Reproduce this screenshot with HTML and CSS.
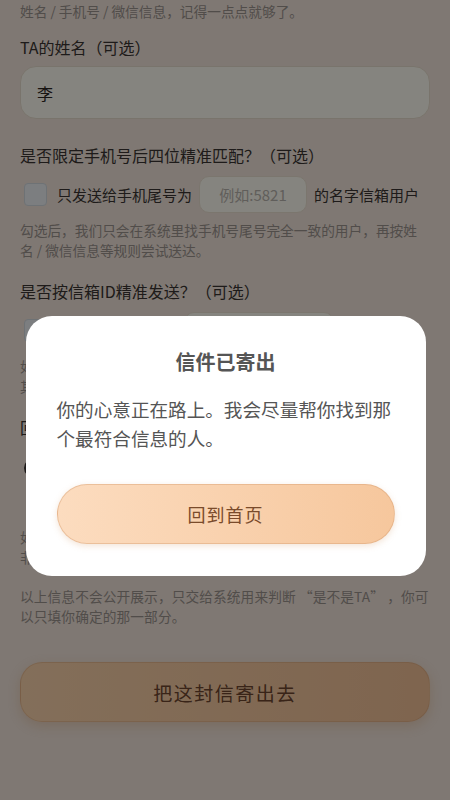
FILE: index.html
```html
<!DOCTYPE html>
<html lang="zh-CN">
<head>
    <meta charset="UTF-8">
    <meta name="viewport" content="width=device-width, initial-scale=1.0">
    <title>寄一封信</title>
    <link rel="stylesheet" href="styles.css">
</head>
<body>
    <div class="page">
        <p class="hint hint-top">姓名 / 手机号 / 微信信息，记得一点点就够了。</p>

        <div class="field">
            <div class="label">TA的姓名（可选）</div>
            <input class="text-input" type="text" value="李">
        </div>

        <div class="field after-input">
            <div class="label">是否限定手机号后四位精准匹配？（可选）</div>
            <div class="check-row">
                <span class="checkbox"></span>
                <span>只发送给手机尾号为</span>
                <input class="mini-input" type="text" placeholder="例如:5821">
                <span>的名字信箱用户</span>
            </div>
            <p class="hint">勾选后，我们只会在系统里找手机号尾号完全一致的用户，再按姓名 / 微信信息等规则尝试送达。</p>
        </div>

        <div class="field">
            <div class="label">是否按信箱ID精准发送？（可选）</div>
            <div class="check-row">
                <span class="checkbox"></span>
                <span>只发送给信箱ID为</span>
                <input class="mini-input wide" type="text" placeholder="例如:A1024">
                <span>的用户</span>
            </div>
            <p class="hint">如果你知道TA的信箱ID，勾选后信件会直接送到这个信箱，不再按其他信息匹配。</p>
        </div>

        <div class="field">
            <div class="label">回信方式（可选）</div>
            <div class="radio-row">
                <span class="radio on"></span>
                <span>允许TA回信</span>
                <span class="radio"></span>
                <span>不需要回信</span>
            </div>
            <p class="hint">如果允许回信，TA可以匿名回复你；<br>非匿名信件会显示你的昵称。</p>
        </div>

        <p class="hint note">以上信息不会公开展示，只交给系统用来判断 “是不是TA” ，你可以只填你确定的那一部分。</p>

        <button class="send-btn">把这封信寄出去</button>
    </div>

    <div class="overlay">
        <div class="modal">
            <h2 class="modal-title">信件已寄出</h2>
            <p class="modal-text">你的心意正在路上。我会尽量帮你找到那个最符合信息的人。</p>
            <button class="home-btn">回到首页</button>
        </div>
    </div>
</body>
</html>
```

FILE: styles.css
```css
* {
    margin: 0;
    padding: 0;
    box-sizing: border-box;
    font-family: "Noto Sans CJK SC", "Noto Sans", sans-serif;
}

body {
    background: #f3e6dc;
    height: 800px;
    overflow: hidden;
}

.page {
    padding: 1px 20px 0;
    color: #3a3532;
}

.hint {
    font-size: 13.7px;
    line-height: 20px;
    color: #9c948f;
}

.field {
    margin-top: 15px;
}

.field + .field {
    margin-top: 20px;
}

.field.after-input {
    margin-top: 25px;
}

.label {
    font-size: 16px;
    line-height: 22px;
    color: #3a3532;
}

.text-input {
    display: block;
    width: 100%;
    height: 53px;
    margin-top: 8px;
    padding: 0 16px;
    border: 1px solid #e9dfcf;
    border-radius: 16px;
    background: #fffdf3;
    font-size: 16px;
    color: #2c2724;
    outline: none;
}

.check-row,
.radio-row {
    display: flex;
    align-items: center;
    height: 37px;
    margin-top: 10px;
    font-size: 15px;
    color: #3a3532;
}

.check-row + .hint,
.radio-row + .hint {
    margin-top: 7px;
}

.checkbox {
    width: 23px;
    height: 23px;
    margin: 0 10px 0 4px;
    border: 1px solid #d3dae0;
    border-radius: 4px;
    background: #eef2f6;
}

.mini-input {
    width: 108px;
    height: 37px;
    margin: 0 7px;
    border: 1px solid #ece2d3;
    border-radius: 10px;
    background: #fffdf3;
    font-size: 15px;
    text-align: center;
    outline: none;
}

.mini-input.wide {
    width: 150px;
}

.mini-input::placeholder {
    color: #b9b4ae;
}

.radio-row {
    height: 40px;
    gap: 8px;
}

.radio {
    width: 20px;
    height: 20px;
    margin-left: 4px;
    border: 1px solid #cfc6bd;
    border-radius: 50%;
    background: #fffdf3;
}

.radio.on {
    border: 6px solid #3a3532;
}

.radio + span {
    margin-right: 20px;
}

.radio-row + .hint {
    margin-top: 39px;
}

.note {
    margin-top: 19px;
    letter-spacing: 0.1px;
}

.send-btn {
    display: block;
    width: 100%;
    height: 60px;
    margin-top: 36px;
    border: 1px solid rgba(214, 160, 116, 0.4);
    border-radius: 22px;
    background: linear-gradient(90deg, #fcd5ad, #f3c197);
    font-size: 19px;
    letter-spacing: 1.5px;
    color: #6e462f;
    box-shadow: 0 4px 12px rgba(210, 150, 100, 0.3);
}

/* success dialog */
.overlay {
    position: fixed;
    inset: 0;
    background: rgba(0, 0, 0, 0.48);
    display: flex;
    justify-content: center;
    align-items: flex-start;
    padding-top: 316px;
}

.modal {
    width: 400px;
    padding: 32px 31px 32px;
    background: #fff;
    border-radius: 26px;
    margin-left: 1px;
}

.modal-title {
    font-size: 20px;
    line-height: 28px;
    font-weight: 700;
    text-align: center;
    color: #555;
}

.modal-text {
    margin-top: 18px;
    font-size: 18.6px;
    line-height: 29px;
    color: #555;
}

.home-btn {
    display: block;
    width: 100%;
    height: 60px;
    margin-top: 32px;
    border: 1px solid rgba(214, 160, 116, 0.45);
    border-radius: 30px;
    background: linear-gradient(90deg, #fcdcbf, #f6c79d);
    font-size: 18px;
    letter-spacing: 1px;
    color: #7a4b2b;
    box-shadow: 0 2px 6px rgba(210, 150, 100, 0.25);
}
```
